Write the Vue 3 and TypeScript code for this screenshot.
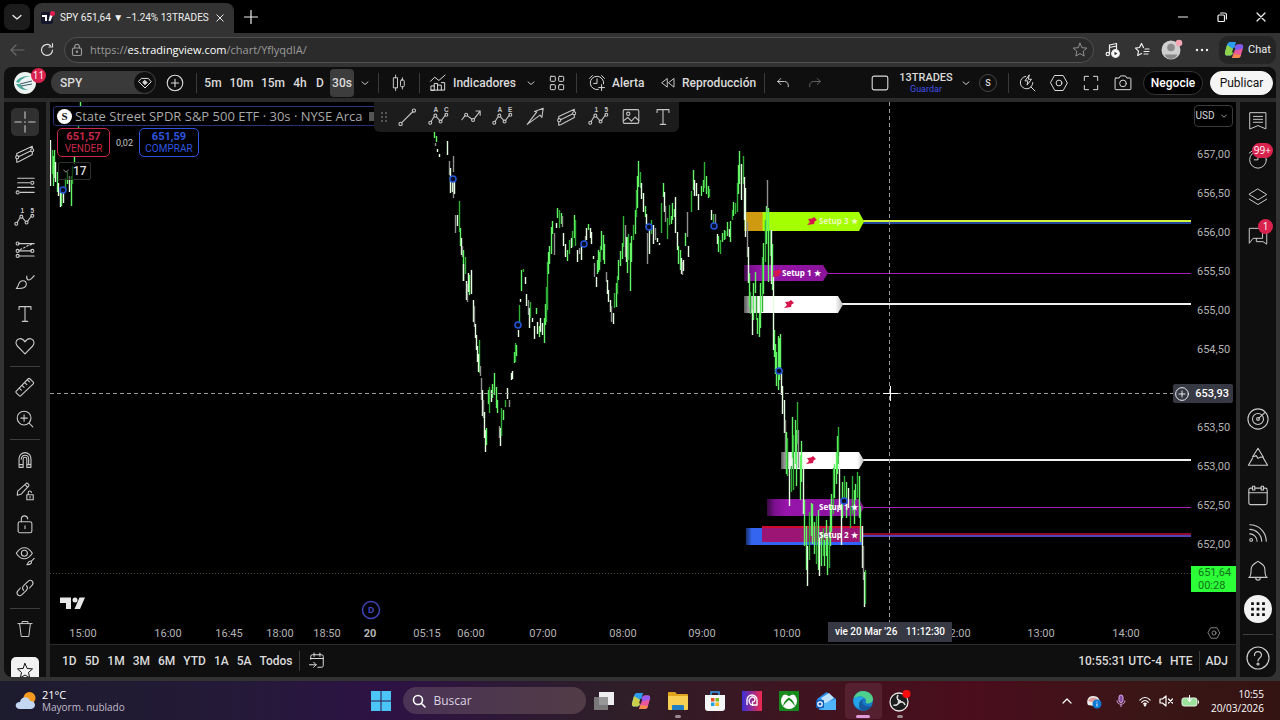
<script setup lang="ts">
interface Candle { x: number; top: number; bottom: number; color: string }
interface Zone { x: number; end: number; y: number; h: number; edge: string; lineY: number; lineW: number; line: string; pin: number; label: string; labelX: number; labelColor: string }

const palette: Record<string, string> = { g: '#2fae35', l: '#62f566', w: '#e6ffe2', s: '#8f8f8f' }

// Each entry is "x top bottom colour"
const raw = `
50 140 186 w,52 150 174 g,53 156 186 l,54 150 178 l,55 162 182 w,57 172 192 l,58 183 196 w,60 190 207 w,61 192 206 l,63 190 203 w,65 178 190 g,67 172 184 l,69 176 192 w,71 176 206 l,72 166 184 g,74 157 164 l,78 125 129 g,80 102 106 l,
434 132 138 l,436 136 142 l,435 143 146 s,437 149 152 w,439 154 157 w,447 141 155 w,449 161 175 s,450 168 193 w,452 182 192 w,453 156 172 s,453 180 198 s,454 182 194 w,
455 215 233 s,457 215 226 w,459 201 232 g,460 228 246 l,461 238 255 w,462 246 257 s,463 250 281 l,465 257 274 g,463 264 281 w,466 281 300 w,467 284 302 s,468 273 292 w,469 275 295 l,471 270 294 w,473 300 322 w,474 306 327 s,475 324 338 w,476 335 350 w,477 346 362 w,479 340 373 g,478 354 372 w,480 366 376 s,481 378 400 s,482 390 416 w,483 400 418 s,484 412 438 w,485 430 452 w,486 428 445 l,
488 390 404 l,489 387 413 g,491 390 402 w,492 384 398 l,494 373 395 l,496 387 408 l,497 400 413 l,499 426 438 s,500 428 446 w,501 408 436 g,503 410 420 l,505 400 407 g,507 388 399 w,509 400 407 s,511 373 380 w,512 371 379 w,514 352 363 l,515 343 362 g,516 345 356 l,518 330 337 w,519 305 322 g,520 299 302 w,521 270 291 l,523 269 272 g,525 277 284 w,526 294 306 w,528 300 315 s,529 308 328 w,530 302 318 g,532 318 322 w,534 326 339 w,536 308 314 l,537 322 334 w,539 326 337 l,540 318 332 w,542 323 335 w,544 318 343 l,545 304 325 l,546 287 322 g,547 262 310 g,548 252 274 l,549 246 264 l,551 227 254 l,552 221 234 l,554 233 255 s,556 223 228 w,557 208 218 l,559 210 228 g,561 213 224 l,562 216 227 s,563 233 246 w,565 244 257 w,567 250 261 l,569 240 254 g,571 238 248 w,572 231 247 g,574 215 238 l,575 220 246 g,577 250 262 w,579 248 254 s,581 246 260 w,585 236 244 s,586 228 240 w,588 224 230 l,590 228 238 w,591 232 244 w,593 256 259 w,594 263 277 s,596 277 287 w,597 260 274 l,598 250 272 l,599 252 270 l,600 246 262 g,601 231 250 l,603 235 260 l,604 244 264 l,606 272 282 s,607 280 294 w,608 290 302 w,610 300 312 w,611 306 322 s,613 313 324 w,614 293 308 g,616 283 307 l,617 276 294 g,618 260 280 l,620 251 266 l,622 243 259 l,623 216 247 g,625 225 257 s,626 237 262 w,627 237 273 l,628 234 260 g,630 243 291 l,631 236 262 l,633 225 240 g,635 210 234 l,636 190 217 g,637 176 208 l,638 161 187 l,640 172 188 g,641 183 199 w,643 193 212 w,645 206 217 l,646 214 228 w,647 233 264 s,649 226 254 w,651 220 234 g,653 225 244 w,655 228 240 s,657 238 242 w,659 243 245 w,661 203 233 g,663 183 197 l,664 192 212 w,665 206 222 s,667 218 239 g,669 205 225 g,671 216 224 l,672 203 220 l,674 209 217 l,675 197 233 w,677 232 250 w,678 246 264 l,680 250 270 l,681 258 274 w,682 262 275 s,683 260 271 w,685 233 246 l,687 212 237 s,688 246 257 w,691 191 212 g,693 170 190 l,694 180 196 w,696 183 196 w,698 194 210 w,701 186 196 l,703 180 192 l,704 162 188 g,706 176 194 l,708 186 198 l,709 189 197 g,711 210 220 w,713 214 223 g,715 214 224 s,717 234 244 w,718 236 252 l,720 240 254 g,722 233 242 l,724 230 240 l,725 231 239 g,727 222 236 l,729 229 237 w,730 221 242 l,732 210 220 g,733 202 216 l,735 203 214 g,737 183 212 g,738 165 194 l,739 151 184 l,741 164 200 w,743 156 184 g,744 177 220 w,
745 188 237 w,747 222 257 s,748 247 283 w,749 273 307 l,750 292 314 g,752 310 335 w,753 283 320 l,755 272 293 l,756 296 320 g,757 318 334 l,759 313 337 l,760 283 328 l,762 257 312 g,763 243 294 l,765 220 262 g,766 206 244 l,767 180 212 s,768 208 282 l,770 230 256 g,771 230 284 w,772 244 290 l,773 276 350 w,774 330 357 l,775 344 374 l,776 352 386 l,778 336 390 l,779 338 380 l,780 334 374 l,781 370 395 w,782 386 414 w,784 400 433 w,785 420 468 s,786 432 474 l,787 438 476 g,789 460 506 w,791 466 492 g,792 417 458 l,793 435 490 g,795 420 464 l,796 430 486 l,797 402 444 g,798 430 468 s,800 455 500 l,801 441 482 l,803 466 514 w,804 500 546 l,806 526 570 l,807 546 586 w,809 512 560 g,811 503 536 l,812 504 544 l,814 522 554 l,816 516 564 g,818 510 570 l,819 538 576 w,821 532 566 l,823 528 556 g,824 540 566 l,826 520 556 l,827 536 575 l,829 526 568 g,830 506 546 l,831 494 532 l,833 468 514 g,834 464 498 l,836 452 484 l,837 436 474 l,838 427 464 g,839 456 508 w,841 500 545 w,842 482 518 l,844 476 502 g,846 482 518 l,848 488 508 w,850 506 528 g,852 476 514 g,854 490 524 l,855 484 500 l,857 472 498 g,859 476 518 l,860 506 542 l,862 526 568 w,863 546 580 s,864 572 607 w,865 570 604 g`

const candles: Candle[] = raw.split(',').map((s) => {
  const [x, top, bottom, c] = s.trim().split(' ')
  return { x: +x, top: +top, bottom: +bottom, color: palette[c] }
})

const zones: Zone[] = [
  { x: 744, end: 864, y: 212, h: 19, edge: 'lime', lineY: 221, lineW: 2, line: '#d6f23a', pin: 812, label: 'Setup 3 ★', labelX: 819, labelColor: '#eaffb8' },
  { x: 744, end: 828, y: 265, h: 16, edge: 'plum', lineY: 273, lineW: 1, line: '#a81cbc', pin: 777, label: 'Setup 1 ★', labelX: 782, labelColor: '#fff' },
  { x: 744, end: 843, y: 296, h: 17, edge: 'snow', lineY: 304, lineW: 2, line: '#f0f0f0', pin: 789, label: '', labelX: 800, labelColor: '#fff' },
  { x: 781, end: 864, y: 452, h: 17, edge: 'snow', lineY: 460, lineW: 2, line: '#f0f0f0', pin: 811, label: '', labelX: 820, labelColor: '#fff' },
  { x: 767, end: 864, y: 499, h: 17, edge: 'plum', lineY: 507, lineW: 1, line: '#a81cbc', pin: 0, label: 'Setup 1 ★', labelX: 819, labelColor: '#fff' },
]
const outline = (z: Zone) =>
  `M${z.x} ${z.y}H${z.end - 5}L${z.end} ${z.y + z.h / 2}L${z.end - 5} ${z.y + z.h}H${z.x}Z`

const markers = [[63, 190], [453, 179], [518, 325], [584, 244], [649, 227], [714, 226], [779, 371], [844, 501]]
const prices = ['657,00', '656,50', '656,00', '655,50', '655,00', '654,50', '', '653,50', '653,00', '652,50', '652,00']
const times = [
  { x: 33, t: '15:00' }, { x: 118, t: '16:00' }, { x: 179, t: '16:45' }, { x: 230, t: '18:00' }, { x: 277, t: '18:50' },
  { x: 320, t: '20', strong: true }, { x: 377, t: '05:15' }, { x: 421, t: '06:00' }, { x: 493, t: '07:00' }, { x: 573, t: '08:00' },
  { x: 652, t: '09:00' }, { x: 737, t: '10:00' }, { x: 907, t: '12:00' }, { x: 991, t: '13:00' }, { x: 1076, t: '14:00' },
]
const ranges = ['1D', '5D', '1M', '3M', '6M', 'YTD', '1A', '5A', 'Todos']
const intervals = ['5m', '10m', '15m', '4h', 'D']

const wave = '<path d="M3.4 17l3-5M9.4 11.8l3.4 4M14.7 15.6l4.2-5.5"/><circle cx="2.5" cy="18.3" r="1.6"/><circle cx="8" cy="10.5" r="1.6"/><circle cx="13.7" cy="17" r="1.6"/><circle cx="20" cy="9.6" r="1.6"/>'
const channel = '<path d="M3 11.5L20 3.500v9L5 20.500 3 21V11.500M5 15l13.500-6.500"/><circle cx="3.500" cy="15.500" r="1.700" fill="#0f0f0f"/><circle cx="19.800" cy="8" r="1.700" fill="#0f0f0f"/>'
const icons: Record<string, string> = {
  cross: '<path d="M12 1v7M12 16v7M1 12h7M16 12h7M11.500 12h1"/>',
  channel,
  fib: '<path d="M4 3.500h18M4 8.500h13M4 13.500h18M7 19h15"/><circle cx="20" cy="8.500" r="1.700"/><circle cx="4" cy="19" r="1.700"/>',
  wave15: wave + '<text x="7" y="6">1</text><text x="18" y="6">5</text>',
  waveAC: wave + '<text x="6" y="6">A</text><text x="17.500" y="6">C</text>',
  waveAE: wave + '<text x="6" y="6">A</text><text x="17.500" y="6">E</text>',
  forecast: '<path d="M5 5h17M5 13h14M5 18.500h17M7 11.500l1.500-.8M10.500 9.800l1.500-.8M14 8l1.500-.8M17.500 6.500L19 6"/><circle cx="4" cy="5" r="1.700"/><circle cx="4" cy="13" r="1.700"/><circle cx="4" cy="18.500" r="1.700"/><circle cx="20" cy="13" r="1.700"/>',
  brush: '<path d="M2.500 19c2-1.200 1.800-4 3.500-6.500 1.700-2.200 5-2.500 6.500-.8 1.700 1.900 1 5-1.300 6.300-2.300 1.300-5.600 1-8.700 1zM14 5.500c-.5 2 0 3.500 1.500 4.300 1.800.5 3.500-1 6.500-4.800"/>',
  text: '<path d="M5.500 7V4h13v3M12 4v16M9 20h6"/>',
  heart: '<path d="M12 20.500L3.600 12C1.200 9.500 1.900 5.500 5 4.300c2.800-1 5.300.4 7 3.200 1.700-2.800 4.200-4.200 7-3.200 3.100 1.200 3.800 5.200 1.400 7.700z"/>',
  ruler: '<path d="M2.500 16.500l13-13.500c.6-.6 1.200-.6 1.800 0L21 6.700c.6.600.6 1.200 0 1.800L7.500 21.500c-.6.600-1.200.6-1.800 0l-3.200-3.200c-.6-.6-.6-1.200 0-1.800zM6 13.500l2 2M9 10.500l2 2M12 7.500l2 2M15 4.500l2 2"/>',
  zoom: '<circle cx="11" cy="11" r="7.500"/><path d="M16.500 16.500L20.500 20.500M11 7.500v7M7.500 11h7"/>',
  magnet: '<path d="M5.500 20V10.500a6.500 6.500 0 0 1 13 0V20H14v-9a2 2 0 0 0-4 0v9zM5.500 17H10M14 17h4.500M8 11c0-5.500 8-5.500 8 0v6"/>',
  penlock: '<path d="M3.500 15.500L4 11 13.500 2.500c1-.6 3.300 1.400 2.700 2.700L7.500 14.500zM12 4l3 3M14 15h7v5.500h-7zM15.500 15v-2.500c0-2.200 3.500-2.200 3.500 0M17.500 17v1.500"/>',
  unlock: '<rect x="4.500" y="9.500" width="15" height="12" rx="2"/><path d="M8 9.500V7c0-5 6.500-5 7-.5M12 14v3"/>',
  eye: '<path d="M2.500 9C7.500 1 15 1 20 9c-5 8-12.500 8-17.500 0z"/><circle cx="11.300" cy="9" r="3.300"/><path d="M14 21.500c1.500-.5.8-4 3.800-4 2.500.6 1.500 4-3.800 4zM19 17.500l3-3"/>',
  link: '<path d="M10.500 14.500c-1.800-1.800-1-4 .3-5.300l4.500-4.500c3.500-3 7 1 4.500 4.200L17 12M13.500 9.500c1.800 1.800 1 4-.3 5.300l-4.500 4.500c-3.500 3-7-1-4.500-4.200L7 12"/>',
  trash: '<path d="M3.500 5.500h17M8.500 5.500V3h7v2.500M5.500 5.500L7.500 21h9l2-15.500"/>',
  star: '<path d="M12 3l2.600 5.900 6.400.6-4.800 4.300 1.400 6.300L12 16.800l-5.600 3.300 1.400-6.300L3 9.500l6.400-.6z"/>',
  line: '<path d="M6 18.500L18.500 6"/><circle cx="5" cy="19.500" r="1.800"/><circle cx="19.500" cy="5" r="1.800"/>',
  path: '<path d="M2 15l3.500-4.500M8 10.500l5 4M15.500 14L22 5.500M17.500 5.500H22V10"/><circle cx="6.700" cy="9.500" r="1.600"/><circle cx="14.200" cy="15.300" r="1.600"/>',
  arrow: '<path d="M3.500 20L14 6.500l-2.500-.5 9.500-3.500-1.500 10-2-2.500z"/>',
  image: '<rect x="3.500" y="4" width="17" height="15" rx="1.500"/><circle cx="9" cy="8.500" r="1.800"/><path d="M4 16l4.500-3.500 4 4 4-4.500 4 4"/>',
  candles: '<path d="M7.500 1.500V5M7.500 18.500V22M16.500 5v3M16.500 17v3"/><rect x="5" y="5" width="5" height="13.500"/><rect x="14" y="8" width="5" height="9" rx="1.500"/>',
  indicators: '<path d="M3.500 20.500v-5h4v5zM7.500 15.500v-3h4v8M11.500 14.500h4.500v6M16 11.500h4v9H3.500M3 10l5-5 5 4 7.500-6.500"/>',
  grid: '<rect x="4" y="4" width="6" height="6" rx="1"/><rect x="14" y="4" width="6" height="6" rx="1"/><rect x="4" y="14" width="6" height="6" rx="1"/><rect x="14" y="14" width="6" height="6" rx="1"/>',
  alert: '<path d="M13.500 19.800A8 8 0 1 1 19.900 13M12 7v5.500H8M3 6.500l3.500-3.500M17.500 3L21 6.500M17.500 14v7M14 17.500h7"/>',
  replay: '<path d="M11 6.500v11L4 12zM20 6.500v11L13 12z"/>',
  undo: '<path d="M9 6L5 10l4 4M5 10h9c3 0 5 2.200 5 5v2"/>',
  redo: '<path d="M15 6l4 4-4 4M19 10h-9c-3 0-5 2.200-5 5v2"/>',
  layout: '<rect x="3.500" y="4.500" width="17" height="15" rx="2"/>',
  flash: '<path d="M10.500 4a7.500 7.500 0 1 0 8.500 7.500M17 17l4.500 4.500M14.500 2.500l-5 7h3.500l-1 5 5.500-7h-3.500z"/>',
  gear: '<path d="M7 3h10l5 9-5 9H7l-5-9z"/><circle cx="12" cy="12" r="3.500"/>',
  full: '<path d="M4 9V4h5M15 4h5v5M20 15v5h-5M9 20H4v-5"/>',
  camera: '<path d="M3.500 6H7.500L9 3.500h6L16.500 6h4a1 1 0 0 1 1 1v12a1 1 0 0 1-1 1h-17a1 1 0 0 1-1-1V7a1 1 0 0 1 1-1z"/><circle cx="12" cy="12.500" r="4"/>',
  gem: '<path d="M8 6.500h8l3.500 4L12 18l-7.500-7.500z"/><path d="M12 9l2.500 2.500L12 14l-2.500-2.500z" fill="currentColor"/>',
  plus: '<circle cx="12" cy="12" r="8.500"/><path d="M12 8v8M8 12h8"/>',
  list: '<path d="M2.500 2h19v19.500l-9.500-4-9.500 4zM6.500 6.500h11M6.500 10h11M6.500 13.500h11"/>',
  clock: '<circle cx="12" cy="13" r="10"/><path d="M12 7v6H7.500M1.500 5l4-3"/>',
  layers: '<path d="M12 2.500L22.500 9 12 15.500 1.500 9zM1.500 14.500L12 21l10.500-6.500"/>',
  chat: '<path d="M1.500 21.500V4h16v12h-11zM17.500 9h5v14L18 20h-8v-4"/>',
  radar: '<circle cx="12" cy="12" r="11"/><circle cx="12" cy="12" r="6"/><circle cx="12" cy="12" r="1.500"/><path d="M13 11l6.500-6"/>',
  pyramid: '<path d="M12 2.500L6 12l4-1.500 2 3 3-1.500 3 0.500zM6 13.500L1.500 21h21L18 13.500"/>',
  calendar: '<rect x="2" y="4.500" width="20" height="18" rx="2"/><path d="M2 9.500h20"/><rect x="6" y="2.500" width="2.500" height="4" fill="#0f0f0f"/><rect x="15.500" y="2.500" width="2.500" height="4" fill="#0f0f0f"/>',
  stream: '<path d="M3 3c10 0 18 8 18 18M3 8c7 0 13 6 13 13M3 13c4.500 0 8 3.500 8 8"/><circle cx="4.500" cy="19.500" r="1.500"/>',
  bell: '<path d="M2 19h20c-2-1-2.500-3-2.500-9 0-5-4-6-7.500-8.500-3.500 2.500-7.500 3.500-7.500 8.500 0 6-.5 8-2.500 9zM9.500 19c0 4 5 4 5 0"/>',
  apps: '<path d="M4.500 4.500h3v3h-3zM10.500 4.500h3v3h-3zM16.500 4.500h3v3h-3zM4.500 10.500h3v3h-3zM10.500 10.500h3v3h-3zM16.500 10.500h3v3h-3zM4.500 16.500h3v3h-3zM10.500 16.500h3v3h-3zM16.500 16.500h3v3h-3z" fill="#0f0f0f" stroke="none"/>',
  help: '<circle cx="12" cy="12" r="11"/><path d="M8.500 9.500c0-5 7-5 7-.5 0 3-3.500 3-3.500 6"/><circle cx="12" cy="18" r="1"/>',
  goto: '<path d="M4.500 10V6.500a2 2 0 0 1 2-2h11a2 2 0 0 1 2 2v11a2 2 0 0 1-2 2H13M4.500 9h15M8.500 2.500v4M15.500 2.500v4M3 16.500h8M8 13.500l3 3-3 3"/>',
  chevron: '<path d="M8 10.500l4 3.500 4-3.500"/>',
}

const drawTools = ['cross', 'channel', 'fib', 'wave15', 'forecast', 'brush', 'text', 'heart']
const measureTools = ['ruler', 'zoom']
const modeTools = ['magnet', 'penlock', 'unlock', 'eye', 'link']
const favourites = ['line', 'waveAC', 'path', 'waveAE', 'arrow', 'channel', 'wave15', 'image', 'text']
const sideTop = [{ i: 'list', b: '' }, { i: 'clock', b: '99+' }, { i: 'layers', b: '' }, { i: 'chat', b: '1' }]
const sideBottom = ['radar', 'pyramid', 'calendar', 'stream', 'bell']
const actions = ['flash', 'gear', 'full', 'camera']
</script>

<template>
  <div class="screen">
    <header class="tabs">
      <button class="tab-menu" aria-label="Pestañas"><svg viewBox="0 0 24 24" class="ic i24" v-html="icons.chevron" /></button>
      <div class="tab">
        <svg class="fav" viewBox="0 0 14 14"><rect y="1" width="12" height="12" rx="2" fill="#15182b" /><path d="M1 4h5v6H4V6H1zM9 4h3l-2.500 6h-2z" fill="#fff" /><circle cx="11.500" cy="2.500" r="2.500" fill="#e01e50" /></svg>
        <span class="tab-title">SPY 651,64 ▼ −1.24% 13TRADES</span>
        <button class="tab-close" aria-label="Cerrar pestaña"><svg viewBox="0 0 10 10" class="ic i8"><path d="M1 1l8 8M9 1L1 9" /></svg></button>
      </div>
      <button class="new-tab" aria-label="Nueva pestaña"><svg viewBox="0 0 14 14" class="ic i14"><path d="M7 .5v13M.5 7h13" /></svg></button>
      <div class="window">
        <button aria-label="Minimizar"><svg viewBox="0 0 10 10" class="ic i10"><path d="M.5 5h9" /></svg></button>
        <button aria-label="Restaurar"><svg viewBox="0 0 10 10" class="ic i10"><rect x="1" y="3" width="6.500" height="6.500" rx="1" /><path d="M3.500 1h4a2 2 0 0 1 2 2v4" /></svg></button>
        <button aria-label="Cerrar"><svg viewBox="0 0 10 10" class="ic i10"><path d="M1 1l8 8M9 1L1 9" /></svg></button>
      </div>
    </header>

    <div class="address">
      <button class="nav dim" aria-label="Atrás"><svg viewBox="0 0 16 16" class="ic i16"><path d="M15 8H2M7 3L2 8l5 5" /></svg></button>
      <button class="nav" aria-label="Actualizar"><svg viewBox="0 0 16 16" class="ic i16"><path d="M13.500 8a5.500 5.500 0 1 1-2-4.300M13.500 1.500V5H10" /></svg></button>
      <div class="url">
        <svg viewBox="0 0 14 14" class="ic i14 muted"><rect x="2.500" y="5" width="9" height="7.500" rx="1.500" /><path d="M4.500 5c0-5 5-5 5 0" /><circle cx="7" cy="8.700" r=".6" /></svg>
        <a href="#" class="link">https://<b>es.tradingview.com</b>/chart/YflyqdIA/</a>
        <svg viewBox="0 0 24 24" class="ic i18 muted" v-html="icons.star" />
      </div>
      <div class="browser-tools">
        <button aria-label="Multimedia"><svg viewBox="0 0 16 16" class="ic i16"><path d="M5.500 12V3l7-1.500V7M5.500 5.500l7-1.500" /><circle cx="3.800" cy="12" r="1.700" /><circle cx="11.500" cy="11.500" r="3.800" fill="#fff" /><path d="M10.500 9.700v3.600l3-1.800z" fill="#333" stroke="none" /></svg></button>
        <button aria-label="Favoritos"><svg viewBox="0 0 16 16" class="ic i16"><path d="M9.500 5.500L7.500 1.500l-2 4-4 .6 3 3-.8 4.400 3.800-2M11 7h4M10 9.500h5M10 12h4" /></svg></button>
        <button aria-label="Perfil"><svg viewBox="0 0 22 22" class="i22"><circle cx="10" cy="11" r="9.500" fill="#cfcfcf" /><circle cx="10" cy="8.500" r="3.800" fill="#8b8b8b" /><path d="M3.500 15.500h13c-3 6-10 6-13 0z" fill="#8b8b8b" /><circle cx="18" cy="4" r="3.300" fill="#f7a8b4" /></svg></button>
        <button aria-label="Más"><svg viewBox="0 0 14 4" class="dots"><circle cx="2" cy="2" r="1.200" /><circle cx="7" cy="2" r="1.200" /><circle cx="12" cy="2" r="1.200" /></svg></button>
      </div>
      <button class="copilot">
        <svg viewBox="0 0 20 20" class="i20"><path d="M6 2h6l-3 11c-.6 2-2 2.500-3.500 2.500H3C.5 15.500.8 13 1.300 11L3 5c.5-2 1.500-3 3-3z" fill="#2a9df0" /><path d="M3 5l-1.700 6c-.6 2-.8 4.500 1.700 4.500h2.500C7 15.500 8.400 15 9 13l1-3.500z" fill="#8fd14a" /><path d="M14 18H8l3-11c.6-2 2-2.500 3.500-2.500H17c2.500 0 2.200 2.500 1.700 4.500L17 15c-.5 2-1.500 3-3 3z" fill="#e8589c" /><path d="M17 4.500h-2.500C13 4.500 11.600 5 11 7l-1 3.500 9-2c.5-2 .2-4-2-4z" fill="#7a5cf0" /><path d="M8 18h6c1.500 0 2.500-1 3-3l-7-1z" fill="#f58a4b" /><path d="M10.300 8L9 12.500" stroke="#252525" stroke-width="2" /></svg>
        Chat
      </button>
    </div>

    <main class="page">
      <nav class="toolbar">
        <button class="w42 account" aria-label="Cuenta">
          <svg viewBox="0 0 22 22" class="i22"><circle cx="11" cy="11" r="11" fill="#edf3f0" /><path d="M2 10c3-5 8-6 14-6-5 1-9 3-11 7M2 12c3 5 7 6 12 6-4-1-6-3-8-6" fill="#4aa89a" /><path d="M6 12l12-3M7 14l11-2" stroke="#356" fill="none" /></svg>
          <span class="badge">11</span>
        </button>
        <div class="symbol">
          <input id="symbol" aria-label="Símbolo" value="SPY" />
          <button aria-label="Información"><svg viewBox="0 0 24 24" class="ic i20" v-html="icons.gem" /></button>
        </div>
        <button class="w38" aria-label="Comparar"><svg viewBox="0 0 24 24" class="ic i22" v-html="icons.plus" /></button>
        <i class="sep" />
        <button v-for="t in intervals" :key="t" :class="'tf t' + t">{{ t }}</button>
        <button class="tf on">30s</button>
        <button class="w22" aria-label="Intervalos"><svg viewBox="0 0 24 24" class="ic i18" v-html="icons.chevron" /></button>
        <i class="sep" />
        <button class="w36" aria-label="Velas"><svg viewBox="0 0 24 24" class="ic i18" v-html="icons.candles" /></button>
        <i class="sep" />
        <button class="labelled indicators"><svg viewBox="0 0 24 24" class="ic i20" v-html="icons.indicators" /><span>Indicadores</span></button>
        <button class="w26" aria-label="Favoritos"><svg viewBox="0 0 24 24" class="ic i18" v-html="icons.chevron" /></button>
        <button class="w26" aria-label="Plantillas"><svg viewBox="0 0 24 24" class="ic i20" v-html="icons.grid" /></button>
        <i class="sep wide" />
        <button class="labelled alert"><svg viewBox="0 0 24 24" class="ic i20" v-html="icons.alert" /><span>Alerta</span></button>
        <button class="labelled replay"><svg viewBox="0 0 24 24" class="ic i18" v-html="icons.replay" /><span>Reproducción</span></button>
        <i class="sep" />
        <button class="w32" aria-label="Deshacer"><svg viewBox="0 0 24 24" class="ic i18" v-html="icons.undo" /></button>
        <button class="w32 dim" aria-label="Rehacer"><svg viewBox="0 0 24 24" class="ic i18" v-html="icons.redo" /></button>
        <span class="grow" />
        <button class="w38" aria-label="Diseño"><svg viewBox="0 0 24 24" class="ic i22" v-html="icons.layout" /></button>
        <button class="layout-name"><span>13TRADES</span><small>Guardar</small></button>
        <button class="w26" aria-label="Diseños"><svg viewBox="0 0 24 24" class="ic i18" v-html="icons.chevron" /></button>
        <button class="strategy">S</button>
        <i class="sep" />
        <button v-for="a in actions" :key="a" class="w32" :aria-label="a"><svg viewBox="0 0 24 24" class="ic i20" v-html="icons[a]" /></button>
        <button class="pill">Negocie</button>
        <button class="pill light">Publicar</button>
      </nav>

      <aside class="tools">
        <button v-for="(t, n) in drawTools" :key="t" :class="{ active: n === 0 }" :aria-label="t"><svg viewBox="0 0 24 24" class="ic i22" v-html="icons[t]" /></button>
        <hr />
        <button v-for="t in measureTools" :key="t" :aria-label="t"><svg viewBox="0 0 24 24" class="ic i22" v-html="icons[t]" /></button>
        <hr />
        <button v-for="t in modeTools" :key="t" :aria-label="t"><svg viewBox="0 0 24 24" class="ic i22" v-html="icons[t]" /></button>
        <hr />
        <button aria-label="Eliminar"><svg viewBox="0 0 24 24" class="ic i20" v-html="icons.trash" /></button>
        <button class="fav-toggle" aria-label="Favoritos"><svg viewBox="0 0 24 24" class="ic i20" v-html="icons.star" /></button>
      </aside>

      <section class="chart">
        <svg class="plot">
          <defs>
            <linearGradient id="lime"><stop offset="0" stop-color="#4c6a10" /><stop offset=".03" stop-color="#d09a10" /><stop offset=".15" stop-color="#d09a10" /><stop offset=".16" stop-color="#a4ff00" /><stop offset="1" stop-color="#a4ff00" /></linearGradient>
            <linearGradient id="plum"><stop offset="0" stop-color="#3b0a44" /><stop offset=".08" stop-color="#7c1090" /><stop offset=".2" stop-color="#9614aa" /><stop offset="1" stop-color="#8a149a" /></linearGradient>
            <linearGradient id="snow"><stop offset="0" stop-color="#555" /><stop offset=".1" stop-color="#eee" /><stop offset=".18" stop-color="#fff" /><stop offset=".92" stop-color="#fff" /><stop offset="1" stop-color="#bbb" /></linearGradient>
            <linearGradient id="blue"><stop offset="0" stop-color="#15306e" /><stop offset=".05" stop-color="#3465f0" /><stop offset="1" stop-color="#2f62ff" /></linearGradient>
          </defs>
          <g transform="translate(-50 -102)">
            <svg x="50" y="102" width="100%" height="100%" overflow="visible">
              <path d="M0 471.500H1141" stroke="#3c4a32" stroke-dasharray="1 2" />
              <path d="M812 121H1141" stroke="#23449c" stroke-width="2" />
              <path d="M812 432H1141" stroke="#8c0c2c" stroke-width="2" />
              <path d="M812 434H1141" stroke="#5145b4" stroke-width="2" />
            </svg>
            <path v-for="z in zones" :key="'l' + z.y" :d="`M${z.end - 2} ${z.lineW === 1 ? z.lineY + 0.5 : z.lineY}H1191`" :stroke="z.line" :stroke-width="z.lineW" />
            <path d="M746 528H862V545H746Z" fill="url(#blue)" />
            <path d="M762 526H862V542H762Z" fill="#9c1474" />
            <path d="M762 527H862" stroke="#d00a2c" stroke-width="2" />
            <path v-for="z in zones" :key="z.y" :d="outline(z)" :fill="`url(#${z.edge})`" />
            <path v-for="(c, n) in candles" :key="n" :d="`M${c.x + 0.5} ${c.top}V${c.bottom}`" :stroke="c.color" stroke-width="1.400" />
            <g v-for="z in zones" :key="'t' + z.y">
              <path v-if="z.pin" :transform="`translate(${z.pin} ${z.lineY})`" d="M-5 4l3-3-2-3 4-.5L2-4l3 3-2.500 1.500L2 3z" fill="#d8144c" />
              <text v-if="z.label" :x="z.labelX" :y="z.lineY + 3" class="tag" :fill="z.labelColor">{{ z.label }}</text>
            </g>
            <text x="819" y="538" class="tag" fill="#fff">Setup 2 ★</text>
            <circle v-for="m in markers" :key="m[0]" :cx="m[0]" :cy="m[1]" r="3" fill="#060d24" stroke="#2456d6" stroke-width="1.500" />
            <path d="M50 393.500H1175M889.500 102V622" stroke="#9a9a9a" stroke-dasharray="4 3" />
            <path d="M883 393.500H898M890.500 386V401" stroke="#fff" />
            <path d="M60 597.500H71V609H66V603H60ZM79.500 597.500H85L80 609H74.500Z" fill="#e8e8e8" />
            <circle cx="75" cy="600" r="2.500" fill="#e8e8e8" />
            <circle cx="371" cy="610" r="8.500" fill="none" stroke="#4145b8" stroke-width="1.500" />
            <text x="371" y="613" text-anchor="middle" class="day">D</text>
          </g>
        </svg>

        <div class="legend">
          <div class="name"><b>S</b><span>State Street SPDR S&amp;P 500 ETF · 30s · NYSE Arca</span><i /></div>
          <div class="quotes">
            <button class="sell"><b>651,57</b><span>VENDER</span></button>
            <span>0,02</span>
            <button class="buy"><b>651,59</b><span>COMPRAR</span></button>
          </div>
          <button class="count"><svg viewBox="0 0 24 24" class="ic i14" v-html="icons.chevron" />17</button>
        </div>

        <div class="favs">
          <span class="grip" />
          <button v-for="f in favourites" :key="f" :aria-label="f"><svg viewBox="0 0 24 24" class="ic i22" v-html="icons[f]" /></button>
        </div>

        <div class="prices">
          <button class="currency">USD<svg viewBox="0 0 24 24" class="ic i14" v-html="icons.chevron" /></button>
          <span v-for="(p, n) in prices" :key="n" class="price">{{ p }}</span>
        </div>
        <div class="cursor-price"><svg viewBox="0 0 24 24" class="ic i18" v-html="icons.plus" /><b>653,93</b></div>
        <div class="last"><span>651,64</span><span>00:28</span></div>

        <div class="times">
          <span v-for="t in times" :key="t.t" :class="{ strong: t.strong }" :style="{ left: t.x + 'px' }">{{ t.t }}</span>
          <div class="cursor-time"><span>vie 20 Mar '26</span><span>11:12:30</span></div>
          <button class="axis-gear" aria-label="Ajustes"><svg viewBox="0 0 24 24" class="ic i14" v-html="icons.gear" /></button>
        </div>
      </section>

      <footer class="ranges">
        <button v-for="r in ranges" :key="r">{{ r }}</button>
        <i class="sep" />
        <button class="goto" aria-label="Ir a"><svg viewBox="0 0 24 24" class="ic i20" v-html="icons.goto" /></button>
        <span class="grow" />
        <button>10:55:31 UTC-4</button>
        <button>HTE</button>
        <i class="sep" />
        <button>ADJ</button>
      </footer>

      <aside class="side">
        <button v-for="s in sideTop" :key="s.i" :aria-label="s.i"><svg viewBox="0 0 24 24" class="ic i20" v-html="icons[s.i]" /><span v-if="s.b" class="badge">{{ s.b }}</span></button>
        <span class="grow" />
        <button v-for="s in sideBottom" :key="s" :aria-label="s"><svg viewBox="0 0 24 24" class="ic i22" v-html="icons[s]" /></button>
        <button aria-label="Aplicaciones"><span class="disc"><svg viewBox="0 0 24 24" class="i22" v-html="icons.apps" /></span></button>
        <hr />
        <button aria-label="Ayuda"><svg viewBox="0 0 24 24" class="ic i24" v-html="icons.help" /></button>
      </aside>
    </main>

    <footer class="taskbar">
      <button class="weather">
        <svg viewBox="0 0 22 20" class="i22"><circle cx="14.500" cy="7" r="6" fill="#f39a1f" /><path d="M5 18c-6-.5-5.500-7 0-7C6 5 14 5 15 10c6-.5 7 7.500 1 8z" fill="#c3d7f3" /></svg>
        <span>21°C<small>Mayorm. nublado</small></span>
      </button>
      <div class="dock">
        <button class="start" aria-label="Inicio"><svg viewBox="0 0 20 20" class="i20"><path d="M0 0h9.500v9.500H0zM10.500 0H20v9.500h-9.500zM0 10.500h9.500V20H0zM10.500 10.500H20V20h-9.500z" fill="#4cc4f7" /></svg></button>
        <label class="search"><svg viewBox="0 0 14 14" class="ic i14 thick"><circle cx="6" cy="6" r="4.500" /><path d="M9.500 9.500l3.500 3.500" /></svg><input aria-label="Buscar" placeholder="Buscar" /></label>
        <button aria-label="Vista de tareas"><svg viewBox="0 0 20 20" class="i20"><rect x="5" y="1" width="15" height="13" fill="#eee" /><rect y="6" width="14" height="13" fill="#888" opacity=".85" /></svg></button>
        <button aria-label="Copilot"><svg viewBox="0 0 20 20" class="i20"><path d="M6 2h6l-3 11c-.6 2-2 2.500-3.500 2.500H3C.5 15.500.8 13 1.300 11L3 5c.5-2 1.500-3 3-3z" fill="#2a9df0" /><path d="M3 5l-1.700 6c-.6 2-.8 4.500 1.700 4.500h2.500C7 15.500 8.400 15 9 13l1-3.500z" fill="#c9cf4a" /><path d="M14 18H8l3-11c.6-2 2-2.500 3.500-2.500H17c2.500 0 2.200 2.500 1.700 4.500L17 15c-.5 2-1.500 3-3 3z" fill="#e8589c" /><path d="M17 4.500h-2.500C13 4.500 11.600 5 11 7l-1 3.500 9-2c.5-2 .2-4-2-4z" fill="#9a5cf0" /><path d="M8 18h6c1.500 0 2.500-1 3-3l-7-1z" fill="#f58a4b" /><path d="M10.300 8L9 12.500" stroke="#2e1e28" stroke-width="2" /></svg></button>
        <button class="open" aria-label="Explorador"><svg viewBox="0 0 20 20" class="i20"><path d="M0 2a1 1 0 0 1 1-1h6l2 2h10a1 1 0 0 1 1 1v5H0z" fill="#e0a51e" /><rect y="5" width="20" height="14" rx="1" fill="#f7cf52" /><path d="M4 19v-4a1 1 0 0 1 1-1h10a1 1 0 0 1 1 1v4z" fill="#1f7fc2" /></svg></button>
        <button aria-label="Tienda"><svg viewBox="0 0 20 20" class="i20"><path d="M6 4V1h8v3" stroke="#3aa0e6" stroke-width="1.500" fill="none" /><path d="M0 4h20v13a3 3 0 0 1-3 3H3a3 3 0 0 1-3-3z" fill="#f4f6f8" /><path d="M6 7h3.500v3.500H6z" fill="#e8502a" /><path d="M10.500 7H14v3.500h-3.500z" fill="#7dba28" /><path d="M6 11.500h3.500V15H6z" fill="#1fa3e6" /><path d="M10.500 11.500H14V15h-3.500z" fill="#f9b916" /></svg></button>
        <button aria-label="Grabador"><svg viewBox="0 0 20 20" class="i20"><defs><linearGradient id="rec"><stop stop-color="#3a30d8" /><stop offset="1" stop-color="#f0284c" /></linearGradient></defs><rect width="20" height="20" fill="url(#rec)" /><path d="M5 14V9a5 5 0 0 1 10 0v5h-4.500a4 4 0 0 1-2-7 2.500 2.500 0 1 1 2 4v4" fill="none" stroke="#fff" stroke-width="1.300" /></svg></button>
        <button aria-label="Xbox"><svg viewBox="0 0 20 20" class="i20"><rect width="20" height="20" rx="1" fill="#168a1c" /><circle cx="10" cy="10" r="8" fill="#fff" /><path d="M4 15.500C4.500 11 7.500 8 10 6.500c2.500 1.500 5.500 4.500 6 9C13.500 11.500 11.500 10 10 9c-1.500 1-3.500 2.500-6 6.500zM5 3.500c2 0 4 1 5 1.700 1-.7 3-1.700 5-1.700-3-2.300-7-2.300-10 0z" fill="#168a1c" /></svg></button>
        <button aria-label="Outlook"><svg viewBox="0 0 20 20" class="i20"><path d="M1 8L10.500 1 20 8v11H3z" fill="#2b8be8" /><path d="M5 7l8-5 5 5-9 6z" fill="#bfe3ff" /><path d="M7 13l13-5v11H5z" fill="#4fb4f8" /><rect y="9" width="8" height="8" rx="1" fill="#0f5bb8" /><circle cx="4" cy="13" r="2.200" fill="none" stroke="#fff" stroke-width="1.300" /></svg></button>
        <button class="open current" aria-label="Edge"><svg viewBox="0 0 20 20" class="i20"><circle cx="10" cy="10" r="10" fill="#1976c8" /><path d="M.5 8C1.500 3.500 5.500 0 10 0c6 0 10 4 10 8 0 3-2.500 4.500-5 4.500s-2.500-1.500-2-2.500C13.500 6 5.500 3.500.5 8z" fill="#4fd08c" /><path d="M.5 8C5 4 10 5.500 11 8c-4 0-6.500 5-3 9.500C3 17.500-.5 13 .5 8z" fill="#23a5e8" /><path d="M11 8c-2.500 1-3.500 7 5 7.500 1 0 2-.3 2.500-.7-2 4-6 5.200-9.500 5C3.500 16 6.500 8 11 8z" fill="#155a9c" /></svg></button>
        <button class="open" aria-label="OBS"><svg viewBox="0 0 22 22" class="i22"><circle cx="10" cy="12" r="9" fill="#1c1c1e" stroke="#e8e8e8" stroke-width="1.300" /><path d="M9 5c-2 3 0 6 3 6M4.500 15c3.500 1 6-1.500 5-4.500M16 15c-1-3.500-4.500-4-6.500-1.500" stroke="#ddd" stroke-width="1.600" fill="none" /><circle cx="17.500" cy="4" r="4" fill="#fb0b0b" /></svg></button>
      </div>
      <div class="tray">
        <button aria-label="Iconos ocultos"><svg viewBox="0 0 14 14" class="ic i14"><path d="M3 9l4-4 4 4" /></svg></button>
        <button aria-label="OneDrive"><svg viewBox="0 0 16 16" class="i16"><path d="M2 12C0 8 2 3 7 3s6 3 7 5l-6 5z" fill="#f0f0f0" /><path d="M2 8c1-4 8-5 10-1l-4 3z" fill="#e0a09a" /><circle cx="11" cy="11" r="4.500" fill="#0c78d4" /><path d="M11 8.500v1M11 10.500v3" stroke="#fff" /></svg></button>
        <button aria-label="Micrófono"><svg viewBox="0 0 14 14" class="i14"><rect x="5" y="1" width="4" height="7.500" rx="2" fill="#8a4ea0" stroke="#d9a8e8" /><path d="M3 6.500c0 5 8 5 8 0M7 10.500V13" stroke="#d9a8e8" fill="none" /></svg></button>
        <button aria-label="Red" class="near"><svg viewBox="0 0 14 14" class="ic i12"><path d="M1 6c3.500-4 8.500-4 12 0M3 8.500c2.500-2.700 5.500-2.700 8 0M5 10.500c1.300-1.300 2.700-1.300 4 0" /><circle cx="7" cy="12" r=".8" /></svg></button>
        <button aria-label="Volumen" class="near"><svg viewBox="0 0 14 14" class="ic i14"><path d="M1 5h2.500L7 2v10L3.500 9H1zM9.500 5l4 4M13.500 5l-4 4" /></svg></button>
        <button aria-label="Batería"><svg viewBox="0 0 18 14" class="i18"><rect x="1" y="4" width="15" height="8" rx="2" fill="#9be29b" stroke="#e8f5e8" /><path d="M17.500 6.500v3" stroke="#e8f5e8" /><path d="M8.500 1v6M6.500 5l2 3 2-3" stroke="#fff" fill="none" /></svg></button>
        <button class="clock"><span>10:55</span><span>20/03/2026</span></button>
      </div>
    </footer>
  </div>
</template>

<style>
body { background: #333; }
</style>

<style scoped>
.screen { height: 100vh; display: flex; flex-direction: column; overflow: hidden; background: #333; color: #dbdbdb; font: 12px/16px Roboto, "Open Sans", sans-serif; }
button { appearance: none; background: none; border: 0; padding: 0; margin: 0; color: inherit; font: inherit; display: flex; align-items: center; justify-content: center; white-space: nowrap; flex: none; }
input { background: none; border: 0; padding: 0; color: inherit; font: inherit; min-width: 0; outline: 0; }
svg { flex: none; display: block; }
.ic { fill: none; stroke: currentColor; stroke-width: 1.200; stroke-linecap: round; stroke-linejoin: round; }
.ic :deep(text) { font: bold 7px "Liberation Sans", sans-serif; fill: currentColor; stroke: none; }
.thick { stroke-width: 1.600; }
.i8 { width: 8px; height: 8px; } .i10 { width: 10px; height: 10px; } .i12 { width: 12px; height: 12px; } .i14 { width: 14px; height: 14px; } .i16 { width: 16px; height: 16px; }
.i18 { width: 18px; height: 18px; } .i20 { width: 20px; height: 20px; } .i22 { width: 22px; height: 22px; } .i24 { width: 24px; height: 24px; }
.dots { width: 14px; height: 4px; fill: currentColor; }
.grow { flex: 1; }
.dim { color: #6a6a6a; }
.muted { color: #9a9a9a; }

.tabs { background: #000; height: 33px; display: flex; flex: none; align-items: center; color: #f0f0f0; }
.tab-menu { width: 26px; height: 26px; margin-left: 4px; border-radius: 7px; background: #1c1c1c; }
.tab { align-self: flex-end; height: 30px; width: 200px; margin-left: 4px; padding: 0 10px 0 7px; display: flex; align-items: center; background: #333; border-radius: 8px 8px 0 0; box-sizing: border-box; }
.fav { width: 14px; height: 14px; }
.tab-title { flex: 1; margin-left: 5px; font-size: 10px; white-space: nowrap; }
.new-tab { width: 34px; height: 30px; }
.window { margin-left: auto; display: flex; }
.window button { width: 39px; height: 33px; }

.address { height: 33px; flex: none; display: flex; align-items: center; }
.nav { width: 30px; }
.nav:first-child { margin-left: 2px; }
.url { flex: 1; min-width: 0; height: 26px; margin-left: 2px; box-sizing: border-box; border: 1px solid #505050; border-radius: 13px; background: #2b2b2b; display: flex; align-items: center; padding: 0 4px 0 5px; }
.link { flex: 1; margin-left: 6px; color: #9b9b9b; text-decoration: none; font: 11px/16px "Open Sans", sans-serif; }
.link b { color: #fff; font-weight: 400; }
.browser-tools { display: flex; margin-left: 3px; }
.browser-tools button { width: 30px; height: 26px; color: #f0f0f0; }
.copilot { width: 57px; height: 28px; gap: 4px; margin: 0 4px 0 2px; border-radius: 9px; background: #252525; color: #f0f0f0; font-size: 11px; }

.page { flex: 1; min-height: 0; margin: 1px 4px 0; display: grid; grid-template: "bar bar bar" 31px "tools chart side" minmax(0, 1fr) "tools ranges side" 32px / 42px minmax(0, 1fr) 36px; column-gap: 4px; background: #2b2b2b; border-radius: 8px; overflow: hidden; }
.toolbar { grid-area: bar; background: #0f0f0f; display: flex; align-items: center; font-weight: 500; }
.toolbar button { height: 28px; }
.sep { width: 1px; height: 20px; background: #3a3a3a; margin: 0 2px; flex: none; }
.sep.wide { margin: 0 6px; }
.w22 { width: 22px; } .w26 { width: 26px; } .w32 { width: 32px; } .w36 { width: 36px; } .w38 { width: 38px; } .w42 { width: 42px; }
.account { position: relative; }
.badge { position: absolute; right: 0; top: -1px; min-width: 15px; height: 15px; border-radius: 8px; background: #d9234e; color: #fff; font: 10px/15px "Open Sans", sans-serif; text-align: center; box-sizing: border-box; }
.symbol { width: 105px; height: 23px; margin-left: 5px; display: flex; border-radius: 12px; background: #3a3a3a; padding: 0 1px 0 9px; box-sizing: border-box; align-items: center; }
.symbol input { flex: 1; width: 0; }
.symbol button { width: 21px; height: 21px; border-radius: 50%; background: #0f0f0f; }
.tf { width: 20px; }
.t5m { width: 28px; } .t10m { width: 29px; } .t15m { width: 34px; }
.tf.on { width: 24px; background: #3d3d3d; border-radius: 4px; }
.labelled { gap: 5px; padding: 0 6px; justify-content: flex-start; box-sizing: border-box; }
.indicators { width: 96px; }
.alert { width: 70px; padding: 0 4px; }
.replay { width: 109px; }
.layout-name { flex-direction: column; width: 54px; line-height: 13px; font-size: 11px; }
.layout-name small { font-size: 9px; line-height: 11px; font-weight: 400; color: #3f51e8; }
.toolbar .strategy { width: 18px; height: 18px; border: 1px solid #444; border-radius: 50%; font-size: 9px; margin: 0 9px 0 0; }
.toolbar .pill { height: 24px; width: 60px; margin: 0 7px 0 4px; border: 1px solid #353535; border-radius: 12px; background: #000; color: #fff; }
.toolbar .pill.light { width: 63px; margin: 0 3px 0 0; background: #f5f5f5; color: #111; border-color: #f5f5f5; font-weight: 400; }

.tools { grid-area: tools; margin-top: 4px; background: #0f0f0f; padding-top: 4px; display: flex; flex-direction: column; align-items: center; overflow: hidden; }
.tools button { width: 28px; height: 28px; margin: 2px 0; color: #c9c9c9; }
.tools .active { background: #303030; border-radius: 5px; }
hr { width: 30px; height: 1px; border: 0; margin: 4px 0; background: #3e3e3e; flex: none; }
.tools .fav-toggle { background: #f2f2f2; color: #111; border-radius: 5px; margin-top: 12px; }

.chart { grid-area: chart; margin-top: 4px; position: relative; background: #000; overflow: hidden; display: grid; grid-template: minmax(0, 1fr) 22px / minmax(0, 1fr) 45px; border-bottom: 1px solid #2b2b2b; }
.plot { position: absolute; inset: 0; width: 100%; height: 100%; }
.tag { font: bold 8px "Open Sans", sans-serif; }
.day { font: bold 9px "Open Sans", sans-serif; fill: #4145b8; }
.legend { grid-area: 1 / 1; position: relative; padding: 4px 4px 4px 3px; justify-self: start; }
.name { width: 330px; height: 20px; box-sizing: border-box; border: 1px solid #273479; border-radius: 3px; display: flex; align-items: center; gap: 3px; padding-left: 3px; color: #a8a8a8; font: 13px/18px "Open Sans", sans-serif; white-space: nowrap; }
.name b { width: 15px; height: 15px; border-radius: 50%; background: #fff; color: #111; font: bold 11px/15px "Liberation Serif", serif; text-align: center; }
.name i { width: 6px; height: 9px; margin-left: 3px; background: #555; }
.quotes { display: flex; align-items: center; margin: 2px 0 0 4px; font-size: 9px; }
.quotes > span { width: 29px; text-align: center; color: #c8c8c8; }
.quotes button { flex-direction: column; height: 29px; border-radius: 5px; font-size: 10px; line-height: 12px; border: 1px solid; background: #000; box-sizing: border-box; }
.quotes b { font-size: 11px; }
.sell { width: 53px; color: #c92a4a; }
.buy { width: 60px; color: #2f55e0; }
.count { height: 18px; margin: 5px 0 0 5px; padding-right: 3px; border: 1px solid #2c332c; border-radius: 2px; box-sizing: border-box; font-weight: 500; background: rgb(0 0 0 / .6); }
.favs { position: absolute; left: 324px; top: 0; height: 30px; background: #1c1c1c; border-radius: 0 0 6px 6px; display: flex; align-items: center; }
.favs button { width: 32px; height: 28px; color: #c4c4c4; }
.grip { width: 8px; height: 12px; margin: 0 3px 0 6px; background: radial-gradient(circle, #555 1px, transparent 1px) 0 0 / 4px 4px; }
.prices { grid-area: 1 / 2; position: relative; display: flex; flex-direction: column; color: #b4b4b4; }
.currency { width: 39px; height: 22px; margin: 3px 0 8px 3px; gap: 3px; border: 1px solid #3b3b3b; border-radius: 4px; box-sizing: border-box; font-size: 10px; color: #dbdbdb; }
.price { height: 39px; line-height: 39px; padding-left: 6px; font-size: 11px; }
.cursor-price { position: absolute; top: 282px; right: 3px; width: 60px; height: 19px; background: #363843; color: #fff; display: flex; align-items: center; justify-content: space-between; padding-right: 4px; box-sizing: border-box; font-size: 11px; border-radius: 2px; }
.cursor-price b, .cursor-time span { font-weight: 500; white-space: nowrap; }
.last { position: absolute; top: 464px; right: 0; width: 45px; height: 26px; box-sizing: border-box; padding: 0 0 0 7px; background: #2cff38; color: #14701a; font-size: 11px; line-height: 13px; display: flex; flex-direction: column; }
.times { grid-area: 2 / 1 / 3 / 3; position: relative; color: #b4b4b4; font-size: 11px; }
.times > span { position: absolute; top: 4px; transform: translateX(-50%); }
.strong { font-weight: 700; }
.cursor-time { position: absolute; left: 778px; top: 0; width: 124px; height: 20px; background: #363843; color: #fff; display: flex; align-items: center; justify-content: space-between; padding: 0 7px; box-sizing: border-box; font-size: 10px; }
.axis-gear { position: absolute; right: 15px; top: 4px; }

.ranges { grid-area: ranges; background: #0f0f0f; display: flex; align-items: center; padding: 0 4px 0 8px; font-weight: 500; }
.ranges button { padding: 0 4px; }
.ranges .goto { margin-left: 1px; }

.side { grid-area: side; margin-top: 4px; background: #0f0f0f; display: flex; flex-direction: column; align-items: center; }
.side button { position: relative; width: 36px; height: 38px; color: #c9c9c9; }
.side hr { margin: 6px 0 4px; }
.side .badge { top: 3px; right: 3px; padding: 0 2px; }
.side .disc { width: 28px; height: 28px; border-radius: 50%; background: #f2f2f2; display: flex; align-items: center; justify-content: center; }

.taskbar { height: 39px; margin-top: 4px; flex: none; display: grid; grid-template-columns: 1fr auto 1fr; align-items: center; color: #fff; font: 11px/16px "Open Sans", sans-serif; background: linear-gradient(90deg, #1d1b2e, #241a38 18%, #2d1245 30%, #2e1e28 48%, #43121f 66%, #4a0d1c 76%, #3a1616 90%, #341313); }
.weather { justify-self: start; margin-left: 15px; gap: 5px; line-height: 13px; text-align: left; }
.weather small { display: block; font-size: 10px; color: #c0bccb; }
.dock { display: flex; align-items: center; margin-left: 6px; }
.dock > button { width: 37px; height: 36px; position: relative; }
.dock > .start { width: 26px; margin-right: 9px; }
.search { width: 183px; height: 27px; border-radius: 14px; background: linear-gradient(90deg, #4a3356, #513c46); display: flex; align-items: center; gap: 8px; padding: 0 9px; box-sizing: border-box; }
.search input { flex: 1; font-size: 12px; }
.search input::placeholder { color: #dcd3e0; opacity: 1; }
.open::after { content: ""; position: absolute; bottom: 1px; width: 6px; height: 3px; border-radius: 2px; background: #9c8c90; }
.current { background: #55202f; border-radius: 4px; }
.current::after { width: 14px; background: #e09ad8; }
.tray { justify-self: end; display: flex; align-items: center; }
.tray button { width: 27px; }
.tray .near { width: 21px; }
.tray .clock { width: 61px; margin-right: 16px; flex-direction: column; align-items: flex-end; line-height: 14px; font-size: 10px; }
</style>
